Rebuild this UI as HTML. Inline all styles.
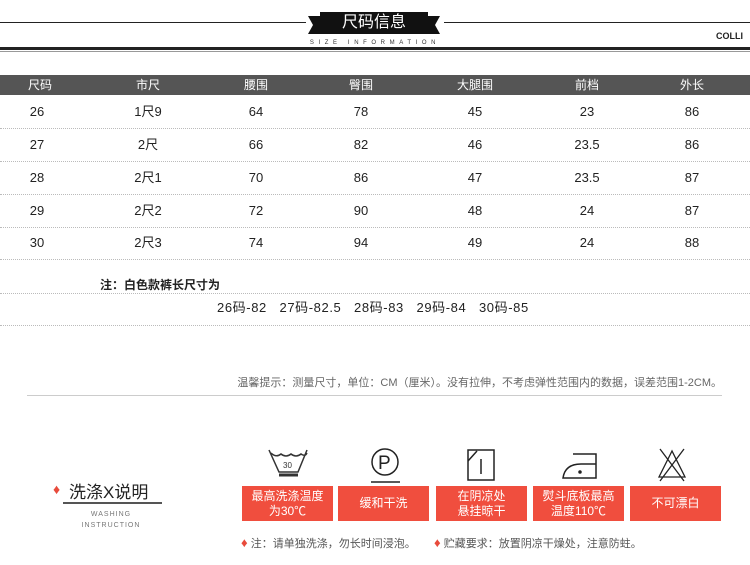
<!DOCTYPE html><html><head><meta charset="utf-8"><style>
*{margin:0;padding:0;box-sizing:border-box}
body{width:750px;height:565px;background:#fff;position:relative;overflow:hidden;font-family:"Liberation Sans","Noto Sans CJK SC",sans-serif;color:#222}
.a{position:absolute}
.c{position:absolute;transform:translateX(-50%);white-space:nowrap;font-size:13px;line-height:16px}
.dot{position:absolute;left:0;width:750px;border-top:1px dotted #bbb}
.box{position:absolute;top:486px;height:35px;width:91px;background:#f04e3e;color:#fff;font-size:12px;text-align:center;display:flex;align-items:center;justify-content:center;line-height:15px}
</style></head><body>
<div class="a" style="left:0;top:22px;width:306px;height:1px;background:#222"></div>
<div class="a" style="left:444px;top:22px;width:306px;height:1px;background:#222"></div>
<svg class="a" style="left:308px;top:10px" width="132" height="26"><polygon points="0,6 16,6 16,24 0,24 5,15" fill="#111"/><polygon points="132,6 116,6 116,24 132,24 127,15" fill="#111"/><rect x="12" y="2" width="108" height="22" fill="#111"/></svg>
<div class="c" style="left:374px;top:14px;color:#fff;font-size:16px;line-height:18px">尺码信息</div>
<div class="c" style="left:375px;top:40px;font-size:6px;line-height:7px;letter-spacing:4.6px;color:#333">SIZE INFORMATION</div>
<div class="a" style="left:716px;top:31px;font-size:9px;font-weight:bold;color:#222">COLLI</div>
<div class="a" style="left:0;top:47px;width:750px;height:3px;background:#222"></div>
<div class="a" style="left:0;top:51px;width:750px;height:1px;background:#999"></div>
<div class="a" style="left:0;top:75px;width:750px;height:20px;background:#555"></div>
<div class="c" style="left:40px;top:77px;color:#fff;font-size:12px">尺码</div>
<div class="c" style="left:148px;top:77px;color:#fff;font-size:12px">市尺</div>
<div class="c" style="left:256px;top:77px;color:#fff;font-size:12px">腰围</div>
<div class="c" style="left:361px;top:77px;color:#fff;font-size:12px">臀围</div>
<div class="c" style="left:475px;top:77px;color:#fff;font-size:12px">大腿围</div>
<div class="c" style="left:587px;top:77px;color:#fff;font-size:12px">前档</div>
<div class="c" style="left:692px;top:77px;color:#fff;font-size:12px">外长</div>
<div class="dot" style="top:128px"></div><div class="dot" style="top:161px"></div><div class="dot" style="top:194px"></div><div class="dot" style="top:227px"></div><div class="dot" style="top:259px"></div><div class="dot" style="top:293px"></div><div class="dot" style="top:325px"></div>
<div class="c" style="left:37px;top:104px">26</div><div class="c" style="left:148px;top:104px">1尺9</div><div class="c" style="left:256px;top:104px">64</div><div class="c" style="left:361px;top:104px">78</div><div class="c" style="left:475px;top:104px">45</div><div class="c" style="left:587px;top:104px">23</div><div class="c" style="left:692px;top:104px">86</div>
<div class="c" style="left:37px;top:137px">27</div><div class="c" style="left:148px;top:137px">2尺</div><div class="c" style="left:256px;top:137px">66</div><div class="c" style="left:361px;top:137px">82</div><div class="c" style="left:475px;top:137px">46</div><div class="c" style="left:587px;top:137px">23.5</div><div class="c" style="left:692px;top:137px">86</div>
<div class="c" style="left:37px;top:170px">28</div><div class="c" style="left:148px;top:170px">2尺1</div><div class="c" style="left:256px;top:170px">70</div><div class="c" style="left:361px;top:170px">86</div><div class="c" style="left:475px;top:170px">47</div><div class="c" style="left:587px;top:170px">23.5</div><div class="c" style="left:692px;top:170px">87</div>
<div class="c" style="left:37px;top:203px">29</div><div class="c" style="left:148px;top:203px">2尺2</div><div class="c" style="left:256px;top:203px">72</div><div class="c" style="left:361px;top:203px">90</div><div class="c" style="left:475px;top:203px">48</div><div class="c" style="left:587px;top:203px">24</div><div class="c" style="left:692px;top:203px">87</div>
<div class="c" style="left:37px;top:235px">30</div><div class="c" style="left:148px;top:235px">2尺3</div><div class="c" style="left:256px;top:235px">74</div><div class="c" style="left:361px;top:235px">94</div><div class="c" style="left:475px;top:235px">49</div><div class="c" style="left:587px;top:235px">24</div><div class="c" style="left:692px;top:235px">88</div>
<div class="a" style="left:100px;top:276px;font-size:12px;font-weight:bold">注：白色款裤长尺寸为</div>
<div class="a" style="left:217px;top:300px;font-size:13px;line-height:16px;white-space:nowrap;letter-spacing:0.6px">26码-82&nbsp;&nbsp;&nbsp;27码-82.5&nbsp;&nbsp;&nbsp;28码-83&nbsp;&nbsp;&nbsp;29码-84&nbsp;&nbsp;&nbsp;30码-85</div>
<div class="a" style="right:28px;top:374px;font-size:11px;color:#666">温馨提示：测量尺寸，单位：CM（厘米）。没有拉伸，不考虑弹性范围内的数据，误差范围1-2CM。</div>
<div class="a" style="left:27px;top:395px;width:695px;height:1px;background:#ccc"></div>
<div class="a" style="left:53px;top:481px;color:#e84b3c;font-size:14px">♦</div>
<div class="a" style="left:69px;top:478px;font-size:17px;color:#222">洗涤X说明</div>
<div class="a" style="left:63px;top:502px;width:99px;height:2px;background:#555"></div>
<div class="c" style="left:111px;top:507px;font-size:7px;color:#777;letter-spacing:1px">WASHING</div>
<div class="c" style="left:111px;top:518px;font-size:7px;color:#777;letter-spacing:1px">INSTRUCTION</div>
<svg class="a" style="left:266px;top:447px" width="45" height="36" fill="none" stroke="#333" stroke-width="1.5"><path d="M5 6 Q10 11 15 7 Q20 11 25 7 Q30 11 35 7 Q39 10 41 6"/><path d="M3 3 L13 25 L32 25 L41 3"/><text x="17" y="21" font-size="8" fill="#333" stroke="none" font-family="Liberation Sans">30</text><path d="M13 28 L32 28" stroke-width="3"/></svg>
<svg class="a" style="left:368px;top:447px" width="36" height="38" fill="none" stroke="#222" stroke-width="1.5"><circle cx="17" cy="15" r="13"/><text x="10" y="22" font-size="19" fill="#222" stroke="none" font-family="Liberation Sans">P</text><path d="M3 35 L32 35"/></svg>
<svg class="a" style="left:466px;top:448px" width="32" height="34" fill="none" stroke="#222" stroke-width="1.5"><rect x="2" y="2" width="26" height="30"/><path d="M2 13 L11 3 M15 11 L15 26"/></svg>
<svg class="a" style="left:561px;top:450px" width="38" height="32" fill="none" stroke="#222" stroke-width="1.5"><path d="M12 4 L35 4 L35 28 L2 28 Q4 14 20 14 L35 14"/><circle cx="19" cy="22" r="1" fill="#222"/></svg>
<svg class="a" style="left:656px;top:447px" width="32" height="36" fill="none" stroke="#222" stroke-width="1.3"><path d="M16 4 L3 30 L29 30 Z M4 2 L28 34 M28 2 L4 34"/></svg>
<div class="box" style="left:242px">最高洗涤温度<br>为30℃</div>
<div class="box" style="left:338px">缓和干洗</div>
<div class="box" style="left:436px">在阴凉处<br>悬挂晾干</div>
<div class="box" style="left:533px">熨斗底板最高<br>温度110℃</div>
<div class="box" style="left:630px">不可漂白</div>
<div class="a" style="left:241px;top:535px;font-size:11px;color:#555"><span style="color:#e84b3c;font-size:13px">♦</span> 注：请单独洗涤，勿长时间浸泡。</div>
<div class="a" style="left:434px;top:535px;font-size:11px;color:#555"><span style="color:#e84b3c;font-size:13px">♦</span> 贮藏要求：放置阴凉干燥处，注意防蛀。</div>
</body></html>
